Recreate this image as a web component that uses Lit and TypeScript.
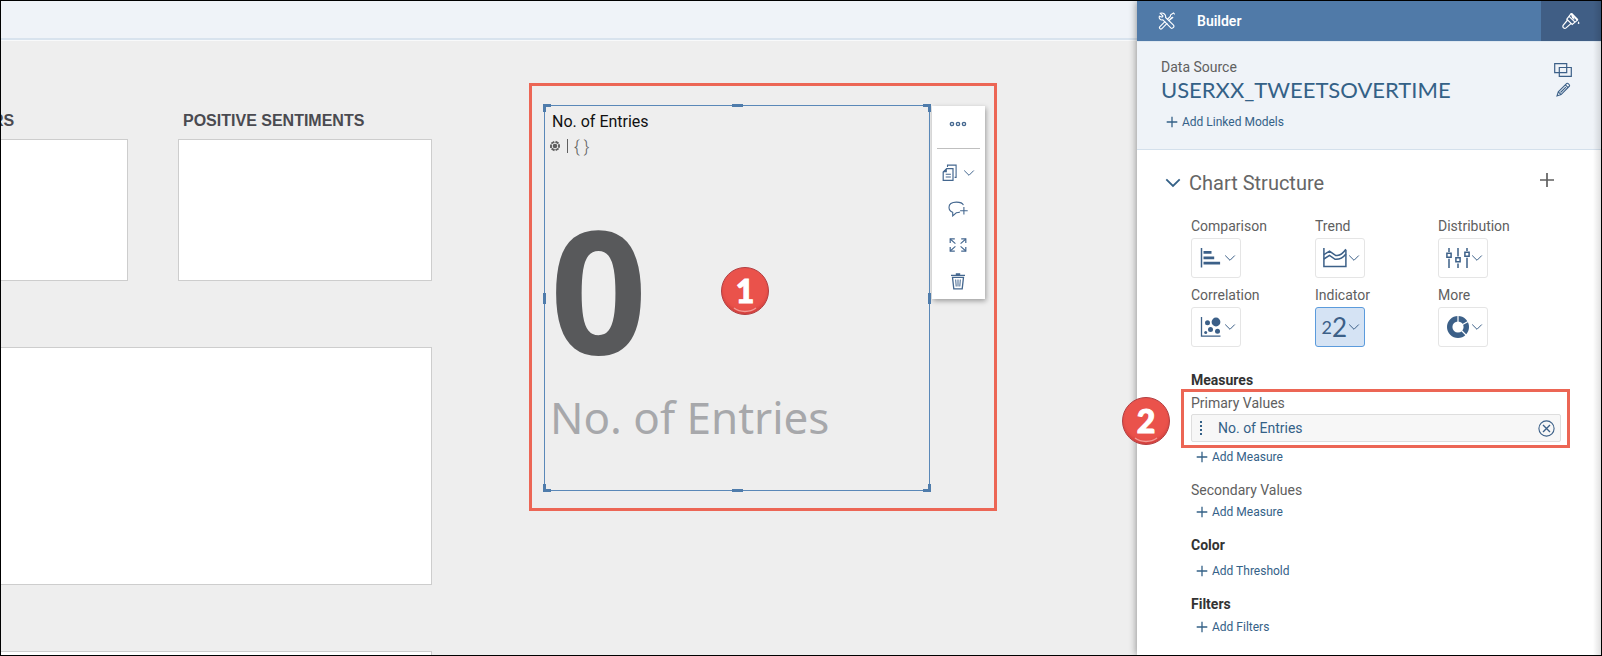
import { LitElement, html, svg, css, TemplateResult } from "lit";
import { customElement, property } from "lit/decorators.js";
import { classMap } from "lit/directives/class-map.js";

const chevron = html`<svg width="12" height="8" viewBox="0 0 12 8" fill="none" stroke="currentColor" aria-hidden="true"><path d="M1.2 1.5 6 6.3l4.800-4.800" /></svg>`;
const plus = html`<svg width="12" height="12" viewBox="0 0 12 12" fill="none" stroke="currentColor" stroke-width="1.300" aria-hidden="true"><path d="M6 .7v10.600M.7 6h10.600" /></svg>`;

const glyph = (w: number, h: number, body: TemplateResult) =>
  html`<svg width=${w} height=${h} viewBox="0 0 ${w} ${h}" fill="none" stroke="currentColor" aria-hidden="true">${body}</svg>`;

const icons = {
  more: glyph(18, 6, svg`<g stroke-width="1.400"><circle cx="3" cy="3" r="1.600"/><circle cx="9" cy="3" r="1.600"/><circle cx="15" cy="3" r="1.600"/></g>`),
  copy: glyph(16, 18, svg`<path stroke-width="1.200" d="M4.700 4.600h6.300v11.800H1.200V8z"/><path fill="currentColor" stroke="none" d="M.7 8.200 4.900 4v4.200z"/><path stroke-width="1.100" d="M5.500 3V1.100h8.600v12.300h-1.500M3.700 10.300h5.200M3.700 13h5.200"/>`),
  comment: glyph(20, 16, svg`<path stroke-width="1.100" d="M15.400 4.100C14.600 1.800 12.500 1.100 8.400 1.100 3.400 1.100 1 3.200 1 6.300c0 2.400 1.300 4.200 3.700 5v3.600l3.600-3.100c1.500 0 2.700-.2 3.600-.7M15.900 6v7.600M12.100 9.800h7.600"/>`),
  expand: glyph(18, 14, svg`<path stroke-width="1.100" d="m1.200 1 5.200 4.600M16.800 1l-5.200 4.600M1.200 13l5.200-4.600M16.800 13l-5.200-4.600"/><path stroke-width="1.200" d="M1.200 5V.9h4.600M12.200.9h4.600V5M1.200 9v4.100h4.600M12.200 13.100h4.600V9"/>`),
  trash: glyph(16, 17, svg`<path stroke-width="1.300" d="M1 2.300h14M5.800 1h4.400M2.500 4.300h11l-1.300 11.600H3.800z"/><path stroke-width="1" d="m5.700 6.500.5 7M8 6.500v7M10.300 6.500l-.5 7"/>`),
  tools: glyph(18, 18, svg`<g stroke-width="1.100"><path d="M2.300 1.300 5 4 4.100 5.200 1.400 4.200c-.8 2.300 1.100 4.300 3.500 3.600l7.900 8.100c1.500 1.300 4.100-.9 2.700-2.700L7.600 5.500C8.200 2.900 5.500.2 2.300 1.300z"/><path d="M16.700 2.300 15.500 1l-2.800 1.800-.4 1.600-3.100 3.100M10.600 8.800l3-3.100 1.500-.5zM7.200 9.300l-5.500 5.500c-.9 1.200.8 2.900 2 2l5.600-5.600"/></g>`),
  brush: glyph(18, 18, svg`<g stroke-width="1.200"><path d="M9.300 1.300 15.800 7.900M9.300 1.300 4.800 7.100l5.400 5.300 5.600-4.500M7.100 4.300l5.900 5.900"/><path d="m5.600 8-4.300 5.200c-1.300 1.900 1 4.200 2.800 2.700l5.100-4.500M9.300 1.300l1.500 5M10.400 2.500l1.700 5"/></g><path stroke="none" fill="currentColor" d="m10 1 6.400 6.500-1.700 1.200L9.500 2zM16.600 9.200c.9 1.300 1.300 2.800 0 2.800s-.9-1.500 0-2.800z"/>`),
  windows: glyph(18, 14, svg`<path stroke-width="1.200" d="M.7.7h12v8.900h-12zM5.300 4.500h12v8.800h-12z"/>`),
  pencil: glyph(15, 15, svg`<path stroke-width="1.100" d="M1 14l1.300-4.200 8.500-8.400c.8-.8 3.500 1.700 2.700 2.600L5.100 12.600zM2.300 9.800l2.800 2.800M9.400 2.900l2.700 2.700M4.500 10.500l5.400-5.400"/>`),
  close: glyph(17, 17, svg`<circle cx="8.500" cy="8.500" r="7.600" stroke-width="1.100"/><path stroke-width="1.400" d="m5 5 7 7M12 5l-7 7"/>`),
  grip: glyph(4, 16, svg`<path stroke="none" fill="currentColor" d="M1 1h2v2H1zM1 5h2v2H1zM1 9h2v2H1zM1 13h2v2H1z"/>`),
  cube: glyph(12, 12, svg`<path stroke-width="1.900" stroke-dasharray="3.500 1.080" stroke-dashoffset="-.540" d="M6 1.400 10 3.700v4.600L6 10.600 2 8.300V3.700z"/><circle cx="6" cy="6" r="2.300" fill="currentColor" stroke="none"/>`),
  comparison: glyph(24, 22, svg`<path stroke-width="1.500" d="M2.500 1v19.500"/><path stroke-width="2.700" d="M4.500 5.300h8M4.500 10.800h10.700M4.500 16.200h16.600"/>`),
  trend: glyph(24, 22, svg`<path stroke-width="1.500" d="M.9 1v18.600h22V3"/><path stroke-width="1.500" d="m.9 7.600 5.600-3.400 6 4.200c4 1 7.300-1.700 10.400-6.100M.9 12l5.600-3.700 5.600 4c4.400.3 8-1.600 10.800-5.300"/>`),
  distribution: glyph(24, 22, svg`<path stroke-width="1.500" d="M3 1v4M3 11.800V21M12 1v8.500M12 16.500V21M21 1v3M21 10.800V21"/><path stroke-width="1.500" d="M.9 6.300h4.200v4H.9zM9.900 10.700h4.200v4H9.900zM18.900 5.200h4.200v4h-4.200z"/>`),
  correlation: glyph(24, 22, svg`<path stroke-width="1.300" d="M2.500 1v19.200h19"/><g fill="currentColor" stroke="none"><circle cx="8.500" cy="6.700" r="2.500"/><circle cx="17" cy="6" r="4.400"/><circle cx="11.500" cy="13.600" r="2.500"/><circle cx="18.500" cy="15.300" r="2.500"/><circle cx="6.700" cy="16.600" r="1.500"/></g>`),
  donut: glyph(24, 24, svg`<circle cx="12" cy="12" r="8.300" stroke-width="5.400" /><path class="cut" stroke-width="1.200" d="M12 12V0M12 12l11-6M12 12l9 9"/>`),
};

@customElement("add-link")
export class AddLink extends LitElement {
  @property() label = "";
  static styles = css`
    :host { display: block; }
    button {
      display: flex; align-items: center; gap: 4px; padding: 0 5px; border: 0; background: none;
      font: 12px/20px Roboto, sans-serif; color: #346187; cursor: pointer;
    }
  `;
  render() {
    return html`<button type="button">${plus}${this.label}</button>`;
  }
}

@customElement("chart-picker")
export class ChartPicker extends LitElement {
  static styles = css`
    :host { display: grid; grid-template-columns: 124px 123px 1fr; row-gap: 7px; }
    .kind { display: flex; flex-direction: column; align-items: flex-start; gap: 2px; font: 14px/20px Roboto, sans-serif; color: #606060; }
    button {
      display: flex; align-items: center; justify-content: flex-end; gap: 1px; box-sizing: border-box;
      width: 50px; height: 40px; padding: 0 4px; border: 1px solid #e5e5e5; border-radius: 3px;
      background: #fff; color: #3c6088;
    }
    .on { background: #d5e3f4; border-color: #5b9bdc; }
    .cut { stroke: #fff; }
    .num { display: flex; align-items: center; justify-content: flex-end; width: 24px; font: 18px/24px Lato, sans-serif; }
    .num b { font: 26px/24px Lato, sans-serif; }
  `;
  private kinds: [string, TemplateResult][] = [
    ["Comparison", icons.comparison],
    ["Trend", icons.trend],
    ["Distribution", icons.distribution],
    ["Correlation", icons.correlation],
    ["Indicator", html`<span class="num">2<b>2</b></span>`],
    ["More", icons.donut],
  ];
  render() {
    return this.kinds.map(([name, icon]) => html`
      <div class="kind">
        <span>${name}</span>
        <button type="button" aria-label=${name} class=${classMap({ on: name === "Indicator" })}>${icon}${chevron}</button>
      </div>`);
  }
}

@customElement("builder-panel")
export class BuilderPanel extends LitElement {
  static styles = css`
    :host {
      display: flex; flex-direction: column; position: relative; background: #fff;
      box-shadow: -1px 0 7px rgba(0, 0, 0, 0.36); font: 14px/20px Roboto, sans-serif; color: #606060;
    }
    button { border: 0; padding: 0; background: none; color: #3c6088; cursor: pointer; display: block; }
    svg { display: block; }
    header { display: flex; align-items: center; gap: 21px; height: 40px; padding-left: 21px; background: #507aa8; color: #fff; }
    h1 { flex: 1; margin: 0; font-size: 14px; font-weight: 600; line-height: 20px; }
    .style { display: grid; place-items: center; width: 60px; height: 40px; background: #405e85; color: #fff; }
    .source { display: flex; justify-content: space-between; padding: 15px 29px 17px 24px; background: #eff3f8; border-bottom: 1px solid #d4e0ec; border-top: 1px solid #dfe8f1; }
    .model { margin: 0 0 9px; font: 22px/26px Lato, sans-serif; color: #346187; }
    .tools { display: flex; flex-direction: column; align-items: center; gap: 5px; padding-top: 6px; }
    .body { padding: 20px 40px 0 54px; }
    .head { display: flex; align-items: center; margin: 0 7px 20px -26px; }
    .head h2 { flex: 1; margin: 0 0 0 8px; font: 20px/26px Roboto, sans-serif; color: #666; }
    .head .add { color: #606060; margin-top: -6px; }
    .head .fold { color: #346187; }
    h3 { margin: 0; font-size: 14px; line-height: 20px; color: #333; }
    section { margin-top: 13px; }
    section.first { margin-top: 23px; }
    .primary { position: relative; margin: 3px 0 5px; }
    .field {
      display: flex; align-items: center; gap: 15px; height: 26px; padding: 0 5px 0 7px; margin-top: 1px;
      border: 1px solid #dedede; border-radius: 2px; background: #f7f7f7; color: #346187;
    }
    .field span { flex: 1; }
    .ring { position: absolute; inset: -4px -9px -6px -10px; border: 3px solid #ec6655; pointer-events: none; }
    .badge { position: absolute; left: -69px; top: 4px; }
    .near { margin-top: 2px; }
    .space { margin-top: 6px; }
    .tight { margin-top: 3px; }
    .edge { position: absolute; inset: 0 0 0 auto; width: 8px; background: linear-gradient(to right, transparent, rgba(0, 0, 0, 0.12)); }
  `;
  render() {
    return html`
      <header>
        ${icons.tools}
        <h1>Builder</h1>
        <button type="button" class="style" aria-label="Styling">${icons.brush}</button>
      </header>
      <div class="source">
        <div>
          <div>Data Source</div>
          <p class="model">USERXX_TWEETSOVERTIME</p>
          <add-link label="Add Linked Models"></add-link>
        </div>
        <div class="tools">
          <button type="button" aria-label="Change model">${icons.windows}</button>
          <button type="button" aria-label="Edit model">${icons.pencil}</button>
        </div>
      </div>
      <div class="body">
        <div class="head">
          <button type="button" class="fold" aria-label="Collapse">
            <svg width="16" height="10" viewBox="0 0 16 10" fill="none" stroke="currentColor" stroke-width="1.800"><path d="m1.300 1.300 6.700 6.700 6.700-6.700" /></svg>
          </button>
          <h2>Chart Structure</h2>
          <button type="button" class="add" aria-label="Add">
            <svg width="14" height="14" viewBox="0 0 14 14" stroke="currentColor" stroke-width="1.700"><path d="M7 0v14M0 7h14" /></svg>
          </button>
        </div>
        <chart-picker></chart-picker>
        <section class="first">
          <h3>Measures</h3>
          <div class="primary">
            <div>Primary Values</div>
            <div class="field">
              ${icons.grip}<span>No. of Entries</span>
              <button type="button" aria-label="Remove No. of Entries">${icons.close}</button>
            </div>
            <div class="ring"></div>
            <call-out class="badge" number="2"></call-out>
          </div>
          <add-link label="Add Measure"></add-link>
        </section>
        <section>
          <div>Secondary Values</div>
          <add-link class="near" label="Add Measure"></add-link>
        </section>
        <section>
          <h3>Color</h3>
          <add-link class="space" label="Add Threshold"></add-link>
        </section>
        <section>
          <h3>Filters</h3>
          <add-link class="tight" label="Add Filters"></add-link>
        </section>
      </div>
      <div class="edge"></div>
    `;
  }
}

@customElement("call-out")
export class CallOut extends LitElement {
  @property() number = "";
  static styles = css`
    :host {
      display: grid; place-items: center; position: relative; box-sizing: border-box; width: 48px; height: 48px;
      border-radius: 50%; border: 1px solid #b23f42; background: #ea524b; color: #fff;
      font: 900 32px/46px Lato, sans-serif; -webkit-text-stroke: 1px #fff;
      box-shadow: inset 0 -3px 3px -1px rgba(190, 50, 50, 0.6);
    }
    svg { position: absolute; left: 11px; bottom: 1px; }
  `;
  render() {
    return html`${this.number}<svg width="24" height="6" viewBox="0 0 24 6" fill="none" stroke="#f39a95" stroke-width="1.500"><path d="M1 1c6 4.500 16 4.500 22 0" /></svg>`;
  }
}

@customElement("chart-widget")
export class ChartWidget extends LitElement {
  static styles = css`
    :host { display: flex; align-items: flex-start; gap: 2px; position: relative; font-family: Roboto, sans-serif; }
    .tile { position: relative; box-sizing: border-box; width: 386px; height: 386px; padding: 6px 7px; border: 1px solid #5a88b8; }
    h2 { margin: 0; font-size: 16px; font-weight: 400; line-height: 20px; color: #111; }
    .meta { display: flex; align-items: center; gap: 6px; height: 16px; margin: 6px 0 0 -3px; color: #606060; font-size: 17px; font-weight: 300; line-height: 16px; }
    .meta i { width: 1px; height: 14px; background: #606060; }
    .value { margin: 69px 0 0 -2px; font: 700 170px/130px "Noto Sans", sans-serif; color: #58595b; }
    .unit { margin: 34px 0 0 -2px; font: 44px/60px "Noto Sans", sans-serif; color: #a7a8ab; white-space: nowrap; }
    .h { position: absolute; background: #4f7cab; }
    .c { position: absolute; width: 8px; height: 8px; box-sizing: border-box; border: 0 solid #4f7cab; }
    .t { top: -2px; } .b { bottom: -2px; } .l { left: -2px; } .r { right: -2px; }
    .c.t { border-top-width: 3px; } .c.b { border-bottom-width: 3px; }
    .c.l { border-left-width: 3px; } .c.r { border-right-width: 3px; }
    .h.t, .h.b { left: calc(50% - 5px); width: 11px; height: 3px; }
    .h.l, .h.r { top: calc(50% - 5px); width: 3px; height: 11px; }
    .bar {
      display: flex; flex-direction: column; align-items: center; box-sizing: border-box; width: 53px; margin-top: 1px;
      background: #fff; box-shadow: 1px 2px 5px rgba(0, 0, 0, 0.35);
    }
    .bar button { display: flex; align-items: center; justify-content: center; gap: 5px; box-sizing: border-box; width: 53px; height: 36px; padding: 0 1px 0 0; border: 0; background: none; color: #44678f; }
    .bar hr { width: 43px; height: 1px; margin: 6px 0; border: 0; background: #bfbfbf; }
    .ring { position: absolute; inset: -22px -67px -20px -15px; width: 462px; border: 3px solid #ec6655; pointer-events: none; }
    .badge { position: absolute; left: 177px; top: 162px; }
  `;
  render() {
    return html`
      <div class="tile">
        <h2>No. of Entries</h2>
        <div class="meta">${icons.cube}<i></i><span>{ }</span></div>
        <div class="value">0</div>
        <div class="unit">No. of Entries</div>
        <span class="c t l"></span><span class="c t r"></span><span class="c b l"></span><span class="c b r"></span>
        <span class="h t"></span><span class="h b"></span><span class="h l"></span><span class="h r"></span>
      </div>
      <div class="bar">
        <button type="button" aria-label="More actions">${icons.more}</button>
        <hr />
        <button type="button" aria-label="Copy">${icons.copy}${chevron}</button>
        <button type="button" aria-label="Add comment">${icons.comment}</button>
        <button type="button" aria-label="Full screen">${icons.expand}</button>
        <button type="button" aria-label="Delete">${icons.trash}</button>
      </div>
      <div class="ring"></div>
      <call-out class="badge" number="1"></call-out>
    `;
  }
}

@customElement("app-root")
export class AppRoot extends LitElement {
  static styles = css`
    :host {
      display: flex; box-sizing: border-box; height: 100vh; overflow: hidden; border: 1px solid #000;
      background: #eee; font-family: Roboto, sans-serif;
    }
    main { flex: 1; min-width: 0; }
    .bar { height: 37px; border-bottom: 2px solid #d8e3ee; background: #eff3f8; }
    .canvas { display: flex; align-items: flex-start; gap: 112px; border-top: 1px solid #f8f9fa; }
    .left { display: flex; flex-direction: column; flex: 0 0 431px; gap: 66px; padding-top: 70px; }
    .row { display: flex; gap: 50px; }
    .kpi { flex: 0 0 254px; min-width: 0; }
    .kpi.cut { flex: 1; overflow: hidden; }
    h2 { margin: 0 0 8px; padding-left: 5px; font: 700 16px/20px "Liberation Sans", sans-serif; color: #4a4a50; white-space: nowrap; }
    .cut h2 { padding: 0; text-indent: -9px; }
    .card { box-sizing: border-box; height: 142px; border: 1px solid #cdcdcd; background: #fff; }
    .cut .card, .wide { border-left: 0; }
    .wide { height: 238px; }
    chart-widget { margin-top: 64px; }
    builder-panel { flex: 0 0 464px; min-width: 0; }
  `;
  render() {
    return html`
      <main>
        <div class="bar"></div>
        <div class="canvas">
          <div class="left">
            <div class="row">
              <div class="kpi cut"><h2>RS</h2><div class="card"></div></div>
              <div class="kpi"><h2>POSITIVE SENTIMENTS</h2><div class="card"></div></div>
            </div>
            <div class="card wide"></div>
            <div class="card wide"></div>
          </div>
          <chart-widget></chart-widget>
        </div>
      </main>
      <builder-panel></builder-panel>
    `;
  }
}
